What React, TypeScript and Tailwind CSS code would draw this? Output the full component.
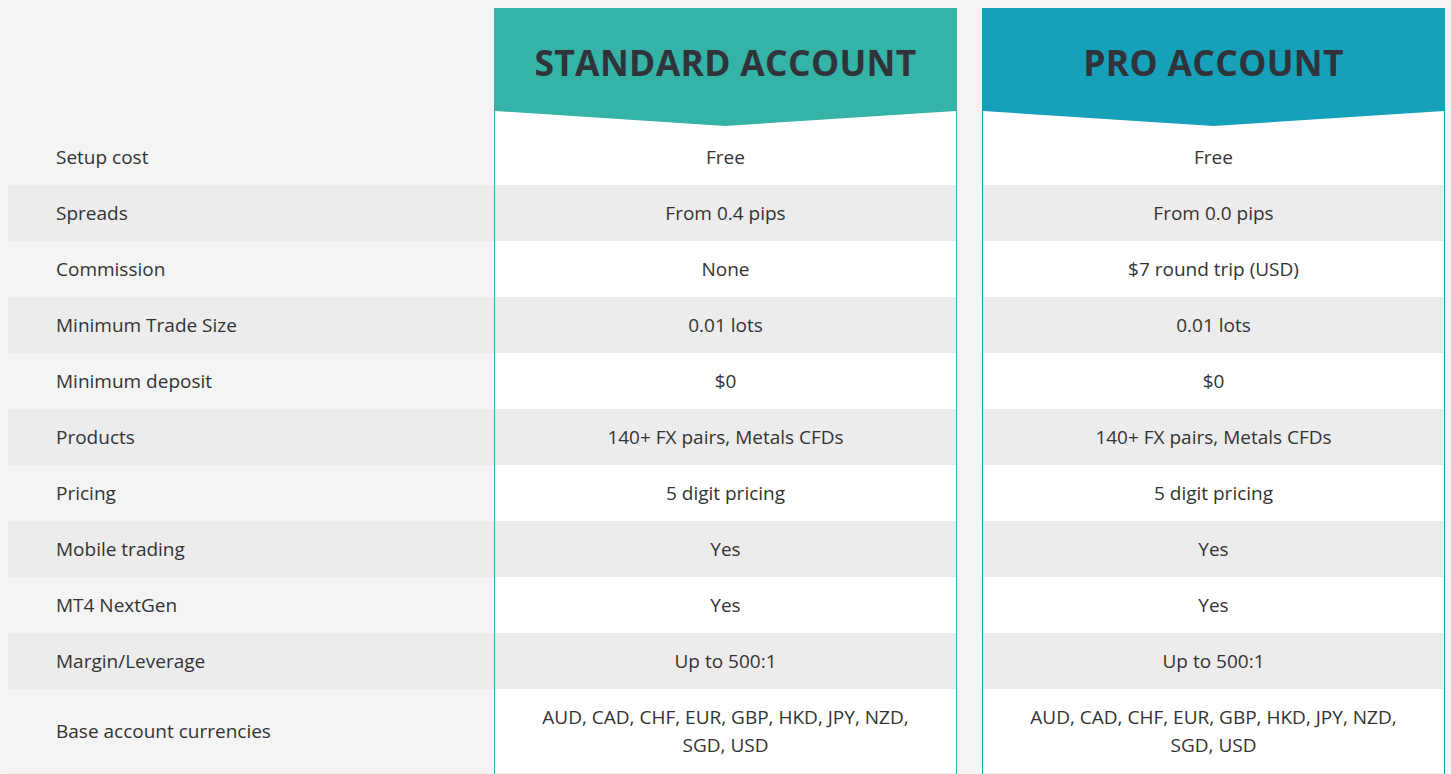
const rows: [string, string, string][] = [
  ['Setup cost', 'Free', 'Free'],
  ['Spreads', 'From 0.4 pips', 'From 0.0 pips'],
  ['Commission', 'None', '$7 round trip (USD)'],
  ['Minimum Trade Size', '0.01 lots', '0.01 lots'],
  ['Minimum deposit', '$0', '$0'],
  ['Products', '140+ FX pairs, Metals CFDs', '140+ FX pairs, Metals CFDs'],
  ['Pricing', '5 digit pricing', '5 digit pricing'],
  ['Mobile trading', 'Yes', 'Yes'],
  ['MT4 NextGen', 'Yes', 'Yes'],
  ['Margin/Leverage', 'Up to 500:1', 'Up to 500:1'],
  ['Base account currencies', 'AUD, CAD, CHF, EUR, GBP, HKD, JPY, NZD, SGD, USD', 'AUD, CAD, CHF, EUR, GBP, HKD, JPY, NZD, SGD, USD'],
  ['', '', ''],
];

const Header = ({ title, bg, fill, border }: { title: string; bg: string; fill: string; border: string }) => (
  <div className="flex flex-col">
    <div className={`h-[103px] flex items-center justify-center ${bg}`}>
      <h2 className="text-[35.5px] font-bold tracking-[0.3px] text-[#30333a] leading-none pt-[6px]">{title}</h2>
    </div>
    <div className={`h-[18px] bg-white border-x ${border}`}>
      <svg className="block w-full h-[15px]" viewBox="0 0 100 15" preserveAspectRatio="none">
        <polygon points="0,0 100,0 50,15" fill={fill} />
      </svg>
    </div>
  </div>
);

export default function App() {
  return (
    <div className="min-h-screen bg-[#f4f4f4] pl-2 pt-2 text-[#333] text-[19px]" style={{ fontFamily: '"Open Sans", "Liberation Sans", sans-serif' }}>
      <div className="flex">
        <div className="w-[486px] h-[121px]" />
        <div className="w-[463px]">
          <Header title="STANDARD ACCOUNT" bg="bg-[#35b3a7]" fill="#35b3a7" border="border-[#33b2a6]" />
        </div>
        <div className="w-[463px] ml-[25px]">
          <Header title="PRO ACCOUNT" bg="bg-[#17a0b9]" fill="#17a0b9" border="border-[#17a0b9]" />
        </div>
      </div>
      {rows.map(([label, std, pro], i) => {
        const striped = i % 2 === 1;
        return (
          <div key={i} className="flex leading-[28px]">
            <div className={`w-[486px] pl-12 py-[14px] flex items-center min-h-[56px] ${striped ? 'bg-[#ececec]' : ''}`}>{label}</div>
            <div className={`w-[463px] px-10 py-[14px] flex items-center justify-center text-center border-x border-[#33b2a6] ${striped ? 'bg-[#ececec]' : 'bg-white'}`}>{std}</div>
            <div className={`w-[463px] ml-[25px] px-10 py-[14px] flex items-center justify-center text-center border-x border-[#17a0b9] ${striped ? 'bg-[#ececec]' : 'bg-white'}`}>{pro}</div>
          </div>
        );
      })}
    </div>
  );
}
